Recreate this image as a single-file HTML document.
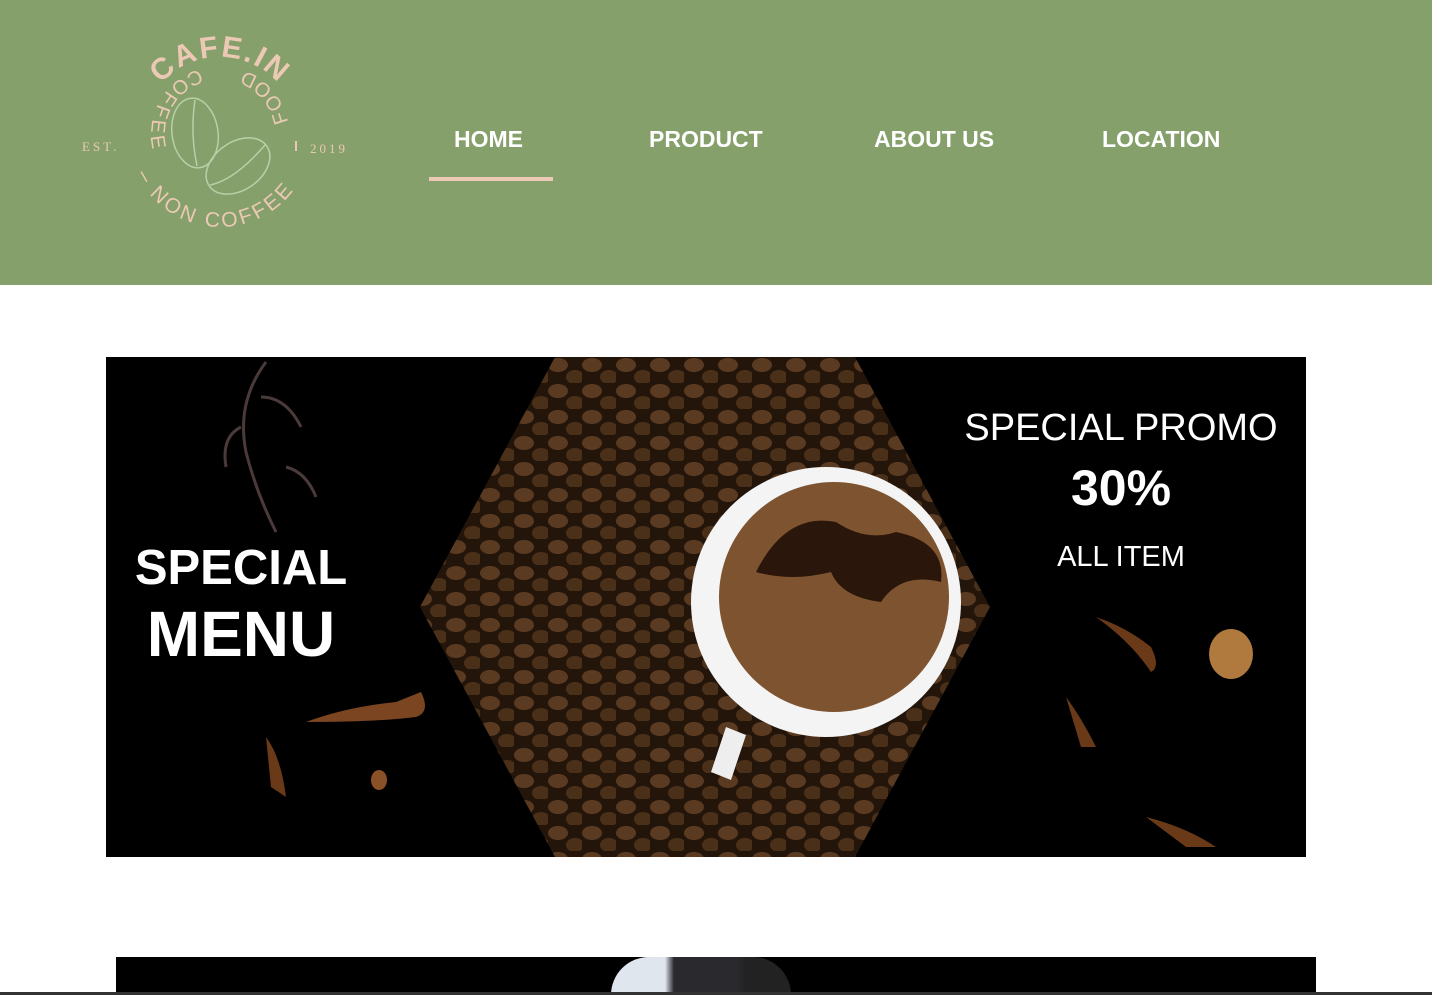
<!DOCTYPE html>
<html><head><meta charset="utf-8"><style>
body{margin:0;width:1432px;height:995px;overflow:hidden;background:#fff;font-family:"Liberation Sans",sans-serif;position:relative}
.hdr{position:absolute;left:0;top:0;width:1432px;height:285px;background:#86a06b}
.nav{position:absolute;top:126px;color:#fff;font-weight:bold;font-size:23px}
.ul{position:absolute;left:429px;top:177px;width:124px;height:4px;background:#ecc9b4}
.ban{position:absolute;left:106px;top:357px;width:1200px;height:500px;background:#000;overflow:hidden}
.t{position:absolute;color:#fff;text-align:center}
</style></head><body>
<div class="hdr">
<svg width="360" height="260" style="position:absolute;left:70px;top:0">
<defs>
<path id="top" d="M72,135 a78,78 0 1,1 156,0"/>
<path id="bot" d="M58,135 a92,92 0 0,0 184,0"/>
<path id="inn" d="M219,135 a69,69 0 1,0 -138,0 a69,69 0 1,0 138,0"/>
</defs>
<text font-family="Liberation Sans" font-weight="bold" font-size="30" fill="#ecc9b4" letter-spacing="2"><textPath href="#top" startOffset="50%" text-anchor="middle">CAFE.IN</textPath></text>
<text font-family="Liberation Sans" font-size="21" fill="#ecc9b4" letter-spacing="3"><textPath href="#bot" startOffset="14%">– NON COFFEE</textPath></text>
<text font-family="Liberation Sans" font-size="20" fill="#ecc9b4" letter-spacing="4"><textPath href="#inn" startOffset="3%">FOOD</textPath></text>
<text font-family="Liberation Sans" font-size="20" fill="#ecc9b4" letter-spacing="4"><textPath href="#inn" startOffset="30%">COFFEE</textPath></text>
<text x="12" y="151" font-family="Liberation Serif" font-size="13" fill="#ecc9b4" letter-spacing="3">EST.</text>
<text x="240" y="153" font-family="Liberation Serif" font-size="13" fill="#ecc9b4" letter-spacing="3">2019</text>
<line x1="226" y1="141" x2="226" y2="151" stroke="#ecc9b4" stroke-width="2"/>
<ellipse cx="125" cy="133" rx="23" ry="35" transform="rotate(-8 125 133)" fill="none" stroke="#b8d0a8" stroke-width="1.5"/>
<path d="M125,100 q-5,33 2,66" fill="none" stroke="#b8d0a8" stroke-width="1.5"/>
<ellipse cx="168" cy="166" rx="35" ry="24" transform="rotate(-35 168 166)" fill="none" stroke="#b8d0a8" stroke-width="1.5"/>
<path d="M140,185 q25,-5 55,-40" fill="none" stroke="#b8d0a8" stroke-width="1.5"/>
</svg>
<div class="nav" style="left:454px">HOME</div>
<div class="nav" style="left:649px">PRODUCT</div>
<div class="nav" style="left:874px">ABOUT US</div>
<div class="nav" style="left:1102px">LOCATION</div>
<div class="ul"></div>
</div>
<div class="ban">
<svg width="1200" height="500" style="position:absolute;left:0;top:0">
<defs><pattern id="bn" width="34" height="26" patternUnits="userSpaceOnUse"><rect width="34" height="26" fill="#24150b"/><ellipse cx="10" cy="8" rx="10" ry="7" fill="#5a3b22"/><ellipse cx="27" cy="20" rx="9" ry="7" fill="#4a3019"/></pattern></defs>
<polygon points="314,250 449,0 749,0 884,250 749,500 449,500" fill="url(#bn)"/>
<path d="M620,370 l-15,45 l20,8 l15,-45z" fill="#eee"/>
<circle cx="720" cy="245" r="135" fill="#f4f4f4"/>
<circle cx="728" cy="240" r="115" fill="#7e5430"/>
<path d="M650,215 q30,-60 80,-50 q30,20 60,10 q50,10 45,50 q-40,-10 -60,20 q-40,-5 -50,-30 q-40,10 -75,0z" fill="#2a160a"/>
<path d="M160,5 q-30,40 -20,90 q10,40 30,80 M155,40 q25,0 40,30 M135,70 q-20,10 -15,40 M180,110 q20,5 30,30" fill="none" stroke="#4a3a3a" stroke-width="3"/>
<ellipse cx="1125" cy="297" rx="22" ry="25" fill="#b07a3e"/>
<path d="M200,365 q40,-15 90,-20 l25,-10 q10,20 -5,25 q-40,5 -110,5z" fill="#7a4520"/>
<path d="M160,380 q15,20 20,60 l-15,-10z M990,260 q30,10 55,30 q10,20 0,25 q-20,-30 -55,-55z M960,340 q15,20 30,50 l-15,0z M1040,460 q40,10 70,30 l-30,0z" fill="#6a3a18"/>
<ellipse cx="273" cy="423" rx="8" ry="10" fill="#8a5028"/>
</svg>
<div class="t" style="left:20px;top:183px;width:230px;font-size:49px;font-weight:bold">SPECIAL</div>
<div class="t" style="left:20px;top:240px;width:230px;font-size:64px;font-weight:bold">MENU</div>
<div class="t" style="left:850px;top:50px;width:330px;font-size:38px">SPECIAL PROMO</div>
<div class="t" style="left:850px;top:102px;width:330px;font-size:50px;font-weight:bold">30%</div>
<div class="t" style="left:850px;top:184px;width:330px;font-size:29px">ALL ITEM</div>
</div>
<div style="position:absolute;left:116px;top:957px;width:1200px;height:38px;background:#000">
<div style="position:absolute;left:495px;top:0;width:180px;height:38px;background:linear-gradient(90deg,#dfe6ee 0 30%,#2a2a2e 35% 70%,#222 75%);border-radius:50px 50px 0 0"></div></div>
<div style="position:absolute;left:0;top:992px;width:1432px;height:3px;background:#333"></div>
</body></html>
